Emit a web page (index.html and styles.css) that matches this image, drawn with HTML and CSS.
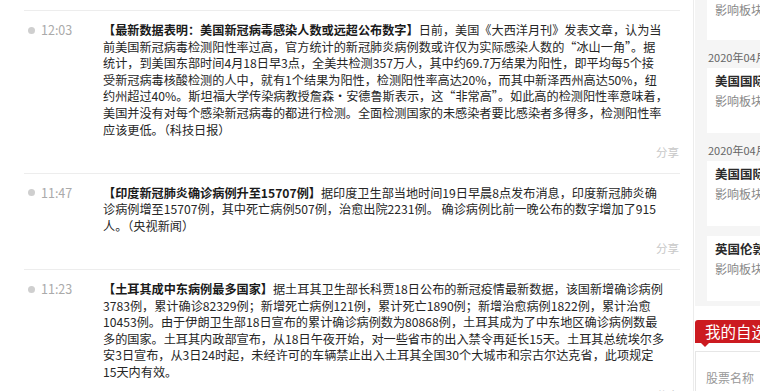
FILE: index.html
```html
<!DOCTYPE html>
<html lang="zh-CN">
<head>
<meta charset="utf-8">
<title>7x24</title>
<link rel="stylesheet" href="styles.css">
</head>
<body>
<div class="page">
  <main class="feed">
    <article class="item">
      <div class="meta"><span class="dot"></span><span class="time">12:03</span></div>
      <div class="body">
        <p class="text"><b>【最新数据表明：美国新冠病毒感染人数或远超公布数字】</b>日前，美国《大西洋月刊》发表文章，认为当<br>前美国新冠病毒检测阳性率过高，官方统计的新冠肺炎病例数或许仅为实际感染人数的“冰山一角”。据<br>统计，到美国东部时间4月18日早3点，全美共检测357万人，其中约69.7万结果为阳性，即平均每5个接<br>受新冠病毒核酸检测的人中，就有1个结果为阳性，检测阳性率高达20%，而其中新泽西州高达50%，纽<br>约州超过40%。斯坦福大学传染病教授詹森·安德鲁斯表示，这“非常高”。如此高的检测阳性率意味着，<br>美国并没有对每个感染新冠病毒的都进行检测。全面检测国家的未感染者要比感染者多得多，检测阳性率<br>应该更低。（科技日报）</p>
        <div class="share">分享</div>
      </div>
    </article>
    <article class="item">
      <div class="meta"><span class="dot"></span><span class="time">11:47</span></div>
      <div class="body">
        <p class="text"><b>【印度新冠肺炎确诊病例升至15707例】</b>据印度卫生部当地时间19日早晨8点发布消息，印度新冠肺炎确<br>诊病例增至15707例，其中死亡病例507例，治愈出院2231例。 确诊病例比前一晚公布的数字增加了915<br>人。（央视新闻）</p>
        <div class="share">分享</div>
      </div>
    </article>
    <article class="item">
      <div class="meta"><span class="dot"></span><span class="time">11:23</span></div>
      <div class="body">
        <p class="text"><b>【土耳其成中东病例最多国家】</b>据土耳其卫生部长科贾18日公布的新冠疫情最新数据，该国新增确诊病例<br>3783例，累计确诊82329例；新增死亡病例121例，累计死亡1890例；新增治愈病例1822例，累计治愈<br>10453例。由于伊朗卫生部18日宣布的累计确诊病例数为80868例，土耳其成为了中东地区确诊病例数最<br>多的国家。土耳其内政部宣布，从18日午夜开始，对一些省市的出入禁令再延长15天。土耳其总统埃尔多<br>安3日宣布，从3日24时起，未经许可的车辆禁止出入土耳其全国30个大城市和宗古尔达克省，此项规定<br>15天内有效。</p>
        <div class="share">分享</div>
      </div>
    </article>
  </main>
  <aside class="side">
    <section class="events">
      <div class="card card-first">
        <div class="card-meta">影响板块：原油、航空</div>
      </div>
      <div class="date">2020年04月20日</div>
      <div class="card">
        <div class="card-title">美国国际原油期货大跌</div>
        <div class="card-meta">影响板块：原油、石化</div>
      </div>
      <div class="date">2020年04月20日</div>
      <div class="card">
        <div class="card-title">美国国际航空运输协会</div>
        <div class="card-meta">影响板块：航空、旅游</div>
      </div>
      <div class="card">
        <div class="card-title">英国伦敦金属交易所</div>
        <div class="card-meta">影响板块：有色金属</div>
      </div>
    </section>
    <section class="mystock">
      <div class="tab">我的自选</div>
      <div class="stock-box">
        <span class="stock-label">股票名称</span>
      </div>
    </section>
  </aside>
</div>
</body>
</html>
```
FILE: styles.css
```css
html, body {
  margin: 0;
  padding: 0;
  overflow: hidden;
  background: #fff;
}
body {
  width: 760px;
  height: 391px;
  font-family: "Noto Sans CJK SC", "Microsoft YaHei", sans-serif;
  color: #333;
}
.page {
  display: flex;
  width: 760px;
  height: 391px;
  overflow: hidden;
}
.feed {
  flex: none;
  width: 656px;
  padding: 10px 13px 0 24px;
}
.item {
  display: flex;
  border-top: 1px solid #ededed;
  padding: 11px 0 12px;
}
.meta {
  flex: none;
  width: 79px;
  height: 16.5px;
  display: flex;
  align-items: center;
}
.dot {
  width: 7px;
  height: 7px;
  border-radius: 50%;
  background: #cfcfcf;
  margin: 0 6px 0 4px;
}
.time {
  font-size: 12.5px;
  color: #aaa;
  line-height: 16.5px;
}
.body {
  flex: 1;
  min-width: 0;
}
.text {
  margin: 0;
  font-size: 12.15px;
  line-height: 16.6px;
  white-space: nowrap;
  color: #262626;
}
.text b {
  color: #1a1a1a;
}
.share {
  margin-top: 6px;
  text-align: right;
  font-size: 11.5px;
  line-height: 16.5px;
  color: #c8c8c8;
  padding-right: 1px;
}
.side {
  flex: none;
  width: 266px;
  border-left: 1px solid #ececec;
  padding-left: 1px;
}
.events {
  background: #f5f5f5;
  padding: 0 0 5px 12px;
}
.card {
  background: #fff;
  padding: 4px 8px 23px;
}
.card + .card {
  margin-top: 10px;
}
.card-first {
  padding-top: 1px;
  padding-bottom: 21px;
}
.card-title {
  font-size: 12.5px;
  font-weight: bold;
  line-height: 18px;
  color: #2a2a2a;
}
.card-meta {
  font-size: 12px;
  line-height: 18px;
  color: #888;
}
.card-title + .card-meta {
  margin-top: 2px;
}
.date {
  font-size: 11px;
  line-height: 16px;
  color: #666;
  margin: 9px 0 3px 1px;
}
.mystock {
  padding-top: 14px;
}
.tab {
  position: relative;
  height: 23px;
  line-height: 23px;
  background: #cc1a20;
  color: #fff;
  font-size: 15.5px;
  padding-left: 10px;
  border-radius: 3px 0 0 0;
}
.tab::after {
  content: "";
  position: absolute;
  left: 6px;
  bottom: -4px;
  border-left: 4px solid transparent;
  border-right: 4px solid transparent;
  border-top: 4px solid #cc1a20;
}
.stock-box {
  margin-top: 8px;
  border: 1px solid #e6e6e6;
  background: #fff;
  padding: 12px 10px;
  height: 60px;
}
.stock-label {
  font-size: 12px;
  line-height: 18px;
  color: #999;
}
```
